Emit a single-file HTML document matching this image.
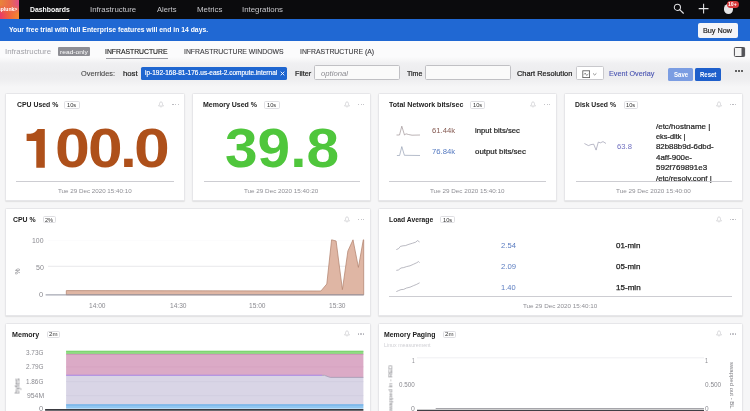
<!DOCTYPE html>
<html>
<head>
<meta charset="utf-8">
<style>
*{box-sizing:border-box;margin:0;padding:0}
html,body{width:750px;height:411px;overflow:hidden;background:#f6f6f7;font-family:"Liberation Sans",sans-serif;color:#222}
#w{position:absolute;left:0;top:0;width:750px;height:411px;overflow:hidden;will-change:transform}
.a{position:absolute}
.t{position:absolute;white-space:nowrap;transform-origin:0 50%}
.card{position:absolute;background:#fff;border:1px solid #e6e6e9;border-radius:1.5px;box-shadow:0 1px 1.2px rgba(0,0,0,0.09)}
svg{position:absolute;overflow:visible}
</style>
</head>
<body>
<div class="a" style="left:0px;top:0px;width:750.00px;height:19.00px;background:#0b0b0d;"></div>
<div class="a" style="left:0;top:0;width:19.2px;height:19.2px;background:linear-gradient(90deg,#ea3a68 0%,#f0603f 45%,#f28a30 100%)"></div>
<div class="a" style="left:0;top:0;width:19.2px;height:19.2px;background:linear-gradient(90deg,#e9843a 0%,#ea6a4a 50%,#de4f88 100%);-webkit-mask-image:linear-gradient(180deg,#000 0%,#000 25%,transparent 75%);mask-image:linear-gradient(180deg,#000 0%,#000 25%,transparent 75%)"></div>
<div class="t" style="left:-1.68px;top:5.82px;font-size:5.2px;line-height:6.76px;color:#fff;font-weight:bold;transform:scaleX(0.9791);">splunk&gt;</div>
<div class="t" style="left:29.55px;top:4.62px;font-size:7.5px;line-height:9.75px;color:#fff;font-weight:bold;transform:scaleX(0.9166);">Dashboards</div>
<div class="t" style="left:89.68px;top:4.50px;font-size:7.7px;line-height:10.01px;color:#c8c8cc;transform:scaleX(1.0200);">Infrastructure</div>
<div class="t" style="left:156.78px;top:4.50px;font-size:7.7px;line-height:10.01px;color:#c8c8cc;transform:scaleX(0.9903);">Alerts</div>
<div class="t" style="left:196.75px;top:4.50px;font-size:7.7px;line-height:10.01px;color:#c8c8cc;transform:scaleX(1.0293);">Metrics</div>
<div class="t" style="left:242.28px;top:4.50px;font-size:7.7px;line-height:10.01px;color:#c8c8cc;transform:scaleX(1.0190);">Integrations</div>
<svg style="left:670px;top:0" width="20" height="19" viewBox="0 0 20 19"><circle cx="7.4" cy="7.3" r="3.1" fill="none" stroke="#e2e2e4" stroke-width="1.05"/><path d="M9.7 9.6 L13.4 13.2" stroke="#e2e2e4" stroke-width="1.2" stroke-linecap="round"/></svg>
<svg style="left:695px;top:0" width="18" height="19" viewBox="0 0 18 19"><path d="M8.6 3.7V13.5M3.7 8.6H13.5" stroke="#e6e6e8" stroke-width="1.05"/></svg>
<div class="a" style="left:723.6px;top:4.2px;width:9.6px;height:9.6px;border-radius:5px;background:#e4e4e6"></div>
<div class="a" style="left:726.8px;top:0.8px;width:12.4px;height:6.8px;border-radius:3.4px;background:#d63a3c"></div>
<div class="t" style="left:728.48px;top:1.22px;font-size:5.2px;line-height:6.76px;color:#fff;font-weight:bold;transform:scaleX(0.9893);">10+</div>
<div class="a" style="left:0px;top:18.9px;width:750.00px;height:21.70px;background:#2068d3;"></div>
<div class="a" style="left:30px;top:18.6px;width:39.00px;height:1.40px;background:#fff;"></div>
<div class="t" style="left:8.88px;top:24.95px;font-size:7.3px;line-height:9.49px;color:#fff;font-weight:bold;transform:scaleX(0.9341);">Your free trial with full Enterprise features will end in 14 days.</div>
<div class="a" style="left:697.6px;top:23px;width:40.6px;height:15px;border-radius:2px;background:#f4f5f8"></div>
<div class="t" style="left:703.01px;top:25.53px;font-size:7.8px;line-height:10.14px;color:#222;-webkit-text-stroke:0.2px #222;transform:scaleX(0.9284);">Buy Now</div>
<div class="a" style="left:0px;top:40.6px;width:750.00px;height:19.40px;background:#fbfbfc;"></div>
<div class="a" style="left:0;top:57px;width:750px;height:30px;background:linear-gradient(180deg,#fbfbfc 0%,#f0f0f2 22%,#ececee 55%,#eeeef0 75%,#f6f6f7 100%)"></div>
<div class="t" style="left:4.68px;top:47.06px;font-size:7.6px;line-height:9.88px;color:#a2a2a8;transform:scaleX(1.0289);">Infrastructure</div>
<div class="a" style="left:58px;top:47.4px;width:31.6px;height:9px;border-radius:1px;background:#8e8e94"></div>
<div class="t" style="left:59.76px;top:47.97px;font-size:6.2px;line-height:8.06px;color:#fff;transform:scaleX(1.0776);">read-only</div>
<div class="t" style="left:105.37px;top:47.45px;font-size:7px;line-height:9.1px;color:#222;-webkit-text-stroke:0.15px #222;transform:scaleX(0.9742);">INFRASTRUCTURE</div>
<div class="a" style="left:106px;top:58px;width:61.60px;height:0.80px;background:#9a9aa0;"></div>
<div class="t" style="left:184.37px;top:47.45px;font-size:7px;line-height:9.1px;color:#3c3c40;-webkit-text-stroke:0.12px #3c3c40;transform:scaleX(0.9808);">INFRASTRUCTURE WINDOWS</div>
<div class="t" style="left:300.37px;top:47.45px;font-size:7px;line-height:9.1px;color:#3c3c40;-webkit-text-stroke:0.12px #3c3c40;transform:scaleX(0.9817);">INFRASTRUCTURE (A)</div>
<svg style="left:733px;top:46px" width="13" height="12" viewBox="0 0 13 12"><rect x="1.4" y="1.5" width="10.2" height="9" rx="1" fill="#f4f4f4" stroke="#4c4c50" stroke-width="1"/><rect x="8.5" y="1.5" width="3.1" height="9" fill="#55555a"/></svg>
<div class="t" style="left:80.65px;top:68.79px;font-size:7.4px;line-height:9.62px;color:#484848;-webkit-text-stroke:0.1px #484848;transform:scaleX(0.9965);">Overrides:</div>
<div class="t" style="left:123.47px;top:68.72px;font-size:7.5px;line-height:9.75px;color:#222;-webkit-text-stroke:0.2px #222;transform:scaleX(1.0290);">host</div>
<div class="a" style="left:141px;top:66.8px;width:146.1px;height:12.8px;border-radius:1.6px;background:#1f66d0"></div>
<div class="t" style="left:145.17px;top:68.78px;font-size:6.8px;line-height:8.84px;color:#fff;-webkit-text-stroke:0.18px #fff;transform:scaleX(0.9560);">ip-192-168-81-176.us-east-2.compute.internal</div>
<svg style="left:279.6px;top:70.6px" width="5" height="5" viewBox="0 0 5 5"><path d="M0.7 0.7L4.3 4.3M4.3 0.7L0.7 4.3" stroke="#fff" stroke-width="0.9"/></svg>
<div class="t" style="left:294.70px;top:68.66px;font-size:7.6px;line-height:9.88px;color:#222;-webkit-text-stroke:0.22px #222;transform:scaleX(0.9602);">Filter</div>
<div class="a" style="left:314.4px;top:65.4px;width:85.2px;height:15px;border:1px solid #c0c0c4;border-radius:1.6px;background:#fafafa"></div>
<div class="t" style="left:320.75px;top:70.38px;font-size:6.8px;line-height:8.84px;color:#8c8c92;font-style:italic;transform:scaleX(1.1364);">optional</div>
<div class="t" style="left:406.75px;top:68.66px;font-size:7.6px;line-height:9.88px;color:#222;-webkit-text-stroke:0.22px #222;transform:scaleX(0.9252);">Time</div>
<div class="a" style="left:425px;top:65.4px;width:86.4px;height:15px;border:1px solid #c0c0c4;border-radius:1.6px;background:#fafafa"></div>
<div class="t" style="left:516.93px;top:68.66px;font-size:7.6px;line-height:9.88px;color:#222;-webkit-text-stroke:0.22px #222;transform:scaleX(0.9778);">Chart Resolution</div>
<div class="a" style="left:576px;top:66px;width:27.6px;height:14px;border:1px solid #c8c8cc;border-radius:1.6px;background:#fff"></div>
<svg style="left:582px;top:69.6px" width="16" height="9" viewBox="0 0 16 9"><rect x="0.8" y="0.8" width="6.8" height="6.8" fill="none" stroke="#555" stroke-width="0.8"/><path d="M2 4.6 L3.2 3 L4.6 5.4 L6.4 4" fill="none" stroke="#555" stroke-width="0.6"/><path d="M11 3.4 L12.7 5 L14.4 3.4" fill="none" stroke="#666" stroke-width="0.7"/></svg>
<div class="t" style="left:608.71px;top:69.19px;font-size:7.4px;line-height:9.62px;color:#4a55b2;-webkit-text-stroke:0.12px #4a55b2;transform:scaleX(0.9749);">Event Overlay</div>
<div class="a" style="left:668.4px;top:67.8px;width:24.6px;height:12.8px;border-radius:1.6px;background:#7b9de2"></div>
<div class="t" style="left:673.63px;top:70.05px;font-size:7px;line-height:9.1px;color:#fff;font-weight:bold;transform:scaleX(0.8673);">Save</div>
<div class="a" style="left:695px;top:67.8px;width:26px;height:12.8px;border-radius:1.6px;background:#1e5fcb"></div>
<div class="t" style="left:699.60px;top:70.05px;font-size:7px;line-height:9.1px;color:#fff;font-weight:bold;transform:scaleX(0.8584);">Reset</div>
<div class="a" style="left:735.00px;top:70.2px;width:1.9px;height:1.9px;border-radius:1px;background:#333"></div>
<div class="a" style="left:738.10px;top:70.2px;width:1.9px;height:1.9px;border-radius:1px;background:#333"></div>
<div class="a" style="left:741.20px;top:70.2px;width:1.9px;height:1.9px;border-radius:1px;background:#333"></div>
<div class="card" style="left:5.30px;top:92.70px;width:179.40px;height:108.50px"></div>
<div class="t" style="left:16.62px;top:100.03px;font-size:7.8px;line-height:10.14px;color:#222;font-weight:bold;transform:scaleX(0.8815);">CPU Used %</div>
<div class="a" style="left:64.3px;top:100.6px;width:15.70px;height:8.00px;border:0.7px solid #dedee2;border-radius:1.6px;background:#fff"></div>
<div class="t" style="left:67.36px;top:101.62px;font-size:5.2px;line-height:6.76px;color:#333;transform:scaleX(1.1026);">10s</div>
<svg style="left:158px;top:100.9px" width="6" height="7" viewBox="0 0 6 7"><path d="M0.5 5 L1.4 3.8 L1.6 2.4 Q1.8 0.8 3 0.8 Q4.2 0.8 4.4 2.4 L4.6 3.8 L5.5 5 Z" fill="none" stroke="#c2c2c8" stroke-width="0.6"/><path d="M2.3 5.9 H3.7" stroke="#c2c2c8" stroke-width="0.6"/></svg>
<div class="a" style="left:172.40px;top:103.9px;width:1.3px;height:1.3px;border-radius:1px;background:#b2b2b8"></div>
<div class="a" style="left:174.95px;top:103.9px;width:1.3px;height:1.3px;border-radius:1px;background:#b2b2b8"></div>
<div class="a" style="left:177.50px;top:103.9px;width:1.3px;height:1.3px;border-radius:1px;background:#b2b2b8"></div>
<svg style="left:0;top:0" width="200" height="200" viewBox="0 0 200 200"><path d="M26.6 133.7 H30.2 Q35.6 133.2 37.6 129 H44.8 V167.7 H36.3 V140.9 H26.6 Z" fill="#ae501a"/></svg>
<div class="t" style="left:54.56px;top:112.29px;font-size:55.4px;line-height:72.02px;color:#ae501a;font-weight:bold;transform:scaleX(1.1315);">0</div>
<div class="t" style="left:88.27px;top:112.29px;font-size:55.4px;line-height:72.02px;color:#ae501a;font-weight:bold;transform:scaleX(1.1239);">0</div>
<div class="t" style="left:120.24px;top:112.29px;font-size:55.4px;line-height:72.02px;color:#ae501a;font-weight:bold;transform:scaleX(1.0932);">.</div>
<div class="t" style="left:134.39px;top:112.29px;font-size:55.4px;line-height:72.02px;color:#ae501a;font-weight:bold;transform:scaleX(1.1617);">0</div>
<div class="a" style="left:15.7px;top:181.2px;width:158.60px;height:1.00px;background:#cdcdd2;"></div>
<div class="t" style="left:58.16px;top:188.06px;font-size:5.9px;line-height:7.67px;color:#8e8e94;transform:scaleX(1.0592);">Tue 29 Dec 2020 15:40:10</div>
<div class="card" style="left:191.80px;top:92.70px;width:178.90px;height:108.50px"></div>
<div class="t" style="left:202.54px;top:100.03px;font-size:7.8px;line-height:10.14px;color:#222;font-weight:bold;transform:scaleX(0.8970);">Memory Used %</div>
<div class="a" style="left:264.4px;top:100.6px;width:15.20px;height:8.00px;border:0.7px solid #dedee2;border-radius:1.6px;background:#fff"></div>
<div class="t" style="left:267.16px;top:101.62px;font-size:5.2px;line-height:6.76px;color:#333;transform:scaleX(1.1026);">10s</div>
<svg style="left:344.2px;top:100.9px" width="6" height="7" viewBox="0 0 6 7"><path d="M0.5 5 L1.4 3.8 L1.6 2.4 Q1.8 0.8 3 0.8 Q4.2 0.8 4.4 2.4 L4.6 3.8 L5.5 5 Z" fill="none" stroke="#c2c2c8" stroke-width="0.6"/><path d="M2.3 5.9 H3.7" stroke="#c2c2c8" stroke-width="0.6"/></svg>
<div class="a" style="left:358.00px;top:103.9px;width:1.3px;height:1.3px;border-radius:1px;background:#b2b2b8"></div>
<div class="a" style="left:360.55px;top:103.9px;width:1.3px;height:1.3px;border-radius:1px;background:#b2b2b8"></div>
<div class="a" style="left:363.10px;top:103.9px;width:1.3px;height:1.3px;border-radius:1px;background:#b2b2b8"></div>
<div class="t" style="left:224.51px;top:112.29px;font-size:55.4px;line-height:72.02px;color:#4fc63c;font-weight:bold;transform:scaleX(1.0579);">39.8</div>
<div class="a" style="left:203.7px;top:181.2px;width:156.60px;height:1.00px;background:#cdcdd2;"></div>
<div class="t" style="left:244.16px;top:188.06px;font-size:5.9px;line-height:7.67px;color:#8e8e94;transform:scaleX(1.0679);">Tue 29 Dec 2020 15:40:20</div>
<div class="card" style="left:377.80px;top:92.70px;width:178.90px;height:108.50px"></div>
<div class="t" style="left:389.12px;top:100.03px;font-size:7.8px;line-height:10.14px;color:#222;font-weight:bold;transform:scaleX(0.9048);">Total Network bits/sec</div>
<div class="a" style="left:470.2px;top:100.6px;width:15.20px;height:8.00px;border:0.7px solid #dedee2;border-radius:1.6px;background:#fff"></div>
<div class="t" style="left:472.96px;top:101.62px;font-size:5.2px;line-height:6.76px;color:#333;transform:scaleX(1.1026);">10s</div>
<svg style="left:530.2px;top:100.9px" width="6" height="7" viewBox="0 0 6 7"><path d="M0.5 5 L1.4 3.8 L1.6 2.4 Q1.8 0.8 3 0.8 Q4.2 0.8 4.4 2.4 L4.6 3.8 L5.5 5 Z" fill="none" stroke="#c2c2c8" stroke-width="0.6"/><path d="M2.3 5.9 H3.7" stroke="#c2c2c8" stroke-width="0.6"/></svg>
<div class="a" style="left:544.00px;top:103.9px;width:1.3px;height:1.3px;border-radius:1px;background:#b2b2b8"></div>
<div class="a" style="left:546.55px;top:103.9px;width:1.3px;height:1.3px;border-radius:1px;background:#b2b2b8"></div>
<div class="a" style="left:549.10px;top:103.9px;width:1.3px;height:1.3px;border-radius:1px;background:#b2b2b8"></div>
<svg style="left:396px;top:123.7px" width="26" height="13" viewBox="0 0 26 13"><path d="M0.5 11 H3.5 L5.8 2.2 L8.5 11 L10 9.8 L12.5 10.5 L16 11.2 L24 11" fill="none" stroke="#8e8284" stroke-width="0.6"/></svg>
<div class="t" style="left:432.41px;top:127.32px;font-size:6.9px;line-height:8.97px;color:#855a52;transform:scaleX(1.1186);">61.44k</div>
<div class="t" style="left:475.09px;top:126.45px;font-size:7.3px;line-height:9.49px;color:#222;-webkit-text-stroke:0.2px #222;transform:scaleX(1.0541);">input bits/sec</div>
<svg style="left:396px;top:145.2px" width="26" height="13" viewBox="0 0 26 13"><path d="M0.9 10.5 H3.6 L5.8 1.6 L8.4 10.3 L24 10.5" fill="none" stroke="#8590a8" stroke-width="0.6"/></svg>
<div class="t" style="left:432.41px;top:147.61px;font-size:6.9px;line-height:8.97px;color:#5479c0;transform:scaleX(1.1190);">76.84k</div>
<div class="t" style="left:474.57px;top:147.35px;font-size:7.3px;line-height:9.49px;color:#222;-webkit-text-stroke:0.2px #222;transform:scaleX(1.0800);">output bits/sec</div>
<div class="a" style="left:389.3px;top:181.2px;width:156.60px;height:1.00px;background:#cdcdd2;"></div>
<div class="t" style="left:430.16px;top:188.06px;font-size:5.9px;line-height:7.67px;color:#8e8e94;transform:scaleX(1.0708);">Tue 29 Dec 2020 15:40:10</div>
<div class="card" style="left:563.80px;top:92.70px;width:178.90px;height:108.50px"></div>
<div class="t" style="left:574.75px;top:100.03px;font-size:7.8px;line-height:10.14px;color:#222;font-weight:bold;transform:scaleX(0.8764);">Disk Used %</div>
<div class="a" style="left:623.6px;top:100.6px;width:14.40px;height:8.00px;border:0.7px solid #dedee2;border-radius:1.6px;background:#fff"></div>
<div class="t" style="left:626.16px;top:101.62px;font-size:5.2px;line-height:6.76px;color:#333;transform:scaleX(1.1026);">10s</div>
<svg style="left:716px;top:100.9px" width="6" height="7" viewBox="0 0 6 7"><path d="M0.5 5 L1.4 3.8 L1.6 2.4 Q1.8 0.8 3 0.8 Q4.2 0.8 4.4 2.4 L4.6 3.8 L5.5 5 Z" fill="none" stroke="#c2c2c8" stroke-width="0.6"/><path d="M2.3 5.9 H3.7" stroke="#c2c2c8" stroke-width="0.6"/></svg>
<div class="a" style="left:729.70px;top:103.9px;width:1.3px;height:1.3px;border-radius:1px;background:#b2b2b8"></div>
<div class="a" style="left:732.25px;top:103.9px;width:1.3px;height:1.3px;border-radius:1px;background:#b2b2b8"></div>
<div class="a" style="left:734.80px;top:103.9px;width:1.3px;height:1.3px;border-radius:1px;background:#b2b2b8"></div>
<svg style="left:0;top:0" width="750" height="200" viewBox="0 0 750 200"><path d="M584.4 143.5 L588.4 145.6 L591 144.6 L593.7 144.2 L596.1 150.1 L598.3 142.1 L600.5 142.8 L603 141.6 L606 143.5" fill="none" stroke="#8c8ca2" stroke-width="0.6"/></svg>
<div class="t" style="left:616.52px;top:142.81px;font-size:6.9px;line-height:8.97px;color:#7070c0;transform:scaleX(1.1106);">63.8</div>
<div class="t" style="left:656.00px;top:121.55px;font-size:7.3px;line-height:9.49px;color:#222;-webkit-text-stroke:0.2px #222;transform:scaleX(1.0910);">/etc/hostname |</div>
<div class="t" style="left:655.69px;top:132.01px;font-size:7.3px;line-height:9.49px;color:#222;-webkit-text-stroke:0.2px #222;transform:scaleX(1.0135);">eks-dltk |</div>
<div class="t" style="left:655.66px;top:142.47px;font-size:7.3px;line-height:9.49px;color:#222;-webkit-text-stroke:0.2px #222;transform:scaleX(1.0766);">82b88b9d-6dbd-</div>
<div class="t" style="left:655.83px;top:152.94px;font-size:7.3px;line-height:9.49px;color:#222;-webkit-text-stroke:0.2px #222;transform:scaleX(1.0867);">4aff-900e-</div>
<div class="t" style="left:655.68px;top:163.39px;font-size:7.3px;line-height:9.49px;color:#222;-webkit-text-stroke:0.2px #222;transform:scaleX(1.0960);">592f769891e3</div>
<div class="t" style="left:656.00px;top:173.85px;font-size:7.3px;line-height:9.49px;color:#222;-webkit-text-stroke:0.2px #222;transform:scaleX(1.0612);">/etc/resolv.conf |</div>
<div class="a" style="left:575.8px;top:181.2px;width:156.00px;height:1.00px;background:#cdcdd2;"></div>
<div class="t" style="left:616.06px;top:188.06px;font-size:5.9px;line-height:7.67px;color:#8e8e94;transform:scaleX(1.0751);">Tue 29 Dec 2020 15:40:00</div>
<div class="card" style="left:5.30px;top:208.10px;width:365.40px;height:107.50px"></div>
<div class="t" style="left:12.52px;top:214.93px;font-size:7.8px;line-height:10.14px;color:#222;font-weight:bold;transform:scaleX(0.8864);">CPU %</div>
<div class="a" style="left:42.6px;top:215.8px;width:13.00px;height:7.40px;border:0.7px solid #dedee2;border-radius:1.6px;background:#fff"></div>
<div class="t" style="left:44.92px;top:216.52px;font-size:5.2px;line-height:6.76px;color:#333;transform:scaleX(1.0747);">2%</div>
<svg style="left:344px;top:215.6px" width="6" height="7" viewBox="0 0 6 7"><path d="M0.5 5 L1.4 3.8 L1.6 2.4 Q1.8 0.8 3 0.8 Q4.2 0.8 4.4 2.4 L4.6 3.8 L5.5 5 Z" fill="none" stroke="#c2c2c8" stroke-width="0.6"/><path d="M2.3 5.9 H3.7" stroke="#c2c2c8" stroke-width="0.6"/></svg>
<div class="a" style="left:358.00px;top:218.6px;width:1.3px;height:1.3px;border-radius:1px;background:#b2b2b8"></div>
<div class="a" style="left:360.55px;top:218.6px;width:1.3px;height:1.3px;border-radius:1px;background:#b2b2b8"></div>
<div class="a" style="left:363.10px;top:218.6px;width:1.3px;height:1.3px;border-radius:1px;background:#b2b2b8"></div>
<div class="t" style="left:31.98px;top:237.00px;font-size:6.3px;line-height:8.19px;color:#8a8a90;transform:scaleX(1.0929);">100</div>
<div class="t" style="left:35.62px;top:263.80px;font-size:6.3px;line-height:8.19px;color:#8a8a90;transform:scaleX(1.1206);">50</div>
<div class="t" style="left:39.31px;top:290.50px;font-size:6.3px;line-height:8.19px;color:#8a8a90;transform:scaleX(1.1930);">0</div>
<div class="a" style="left:13px;top:266.6px;width:9px;height:9px;font-size:6.8px;line-height:9px;text-align:center;color:#77777d;transform:rotate(-90deg);will-change:transform">%</div>
<svg style="left:0;top:0" width="750" height="411" viewBox="0 0 750 411"><path d="M48 266.3 H363.5" stroke="#e2e2e6" stroke-width="0.8"/><path d="M48 240.3 H363.5" stroke="#f8f8fa" stroke-width="0.6"/><path d="M66.3 294.8 V290.6 L320.9 291 L326.8 284 L331.6 239.8 L336.1 241 L342.4 289.6 L347.9 251 L353 239.8 L358.4 267.4 L363.3 239.8 L363.7 239.8 V294.8 Z" fill="#dfb6a4" stroke="#b38470" stroke-width="0.75" stroke-linejoin="round"/><path d="M45.6 294.9 H363.7" stroke="#8f93a0" stroke-width="1"/></svg>
<div class="t" style="left:89.30px;top:302.30px;font-size:6.3px;line-height:8.19px;color:#8a8a90;transform:scaleX(1.0502);">14:00</div>
<div class="t" style="left:169.70px;top:302.30px;font-size:6.3px;line-height:8.19px;color:#8a8a90;transform:scaleX(1.0502);">14:30</div>
<div class="t" style="left:249.30px;top:302.30px;font-size:6.3px;line-height:8.19px;color:#8a8a90;transform:scaleX(1.0502);">15:00</div>
<div class="t" style="left:328.60px;top:302.30px;font-size:6.3px;line-height:8.19px;color:#8a8a90;transform:scaleX(1.0502);">15:30</div>
<div class="card" style="left:377.80px;top:208.10px;width:364.90px;height:107.50px"></div>
<div class="t" style="left:388.75px;top:214.93px;font-size:7.8px;line-height:10.14px;color:#222;font-weight:bold;transform:scaleX(0.8681);">Load Average</div>
<div class="a" style="left:440.4px;top:215.8px;width:14.80px;height:7.40px;border:0.7px solid #dedee2;border-radius:1.6px;background:#fff"></div>
<div class="t" style="left:442.96px;top:216.52px;font-size:5.2px;line-height:6.76px;color:#333;transform:scaleX(1.1026);">10s</div>
<svg style="left:716px;top:215.6px" width="6" height="7" viewBox="0 0 6 7"><path d="M0.5 5 L1.4 3.8 L1.6 2.4 Q1.8 0.8 3 0.8 Q4.2 0.8 4.4 2.4 L4.6 3.8 L5.5 5 Z" fill="none" stroke="#c2c2c8" stroke-width="0.6"/><path d="M2.3 5.9 H3.7" stroke="#c2c2c8" stroke-width="0.6"/></svg>
<div class="a" style="left:729.70px;top:218.6px;width:1.3px;height:1.3px;border-radius:1px;background:#b2b2b8"></div>
<div class="a" style="left:732.25px;top:218.6px;width:1.3px;height:1.3px;border-radius:1px;background:#b2b2b8"></div>
<div class="a" style="left:734.80px;top:218.6px;width:1.3px;height:1.3px;border-radius:1px;background:#b2b2b8"></div>
<svg style="left:396.3px;top:239.9px" width="25" height="11" viewBox="0 0 25 11"><path d="M0.3 9.6 L2.6 8.6 L4.4 6.4 L7 5.8 L9.5 5.6 L12 4.6 L16.6 3.2 L19.6 2.2 L21.6 0.6 L23.6 2" fill="none" stroke="#8c8c98" stroke-width="0.6"/></svg>
<div class="t" style="left:500.82px;top:242.11px;font-size:6.9px;line-height:8.97px;color:#5a7cc0;transform:scaleX(1.1101);">2.54</div>
<div class="t" style="left:615.89px;top:240.75px;font-size:7.3px;line-height:9.49px;color:#222;-webkit-text-stroke:0.25px #222;transform:scaleX(1.0898);">01-min</div>
<svg style="left:396.3px;top:260.8px" width="25" height="11" viewBox="0 0 25 11"><path d="M0.3 9.4 L2.4 9 L5 7 L7.6 6.6 L10.6 5.6 L14 4.8 L17.6 3.2 L20.6 1.8 L22.6 0.6 L23.6 1.6" fill="none" stroke="#8c8c98" stroke-width="0.6"/></svg>
<div class="t" style="left:500.81px;top:263.01px;font-size:6.9px;line-height:8.97px;color:#5a7cc0;transform:scaleX(1.1209);">2.09</div>
<div class="t" style="left:615.89px;top:261.65px;font-size:7.3px;line-height:9.49px;color:#222;-webkit-text-stroke:0.25px #222;transform:scaleX(1.0898);">05-min</div>
<svg style="left:396.3px;top:281.7px" width="25" height="11" viewBox="0 0 25 11"><path d="M0.3 9.6 L2.6 8.6 L5 7.6 L7.6 7.4 L10.6 6 L14 5.2 L17.6 3.6 L20.6 2.4 L23.6 0.8" fill="none" stroke="#8c8c98" stroke-width="0.6"/></svg>
<div class="t" style="left:501.23px;top:283.91px;font-size:6.9px;line-height:8.97px;color:#5a7cc0;transform:scaleX(1.0838);">1.40</div>
<div class="t" style="left:615.59px;top:282.55px;font-size:7.3px;line-height:9.49px;color:#222;-webkit-text-stroke:0.25px #222;transform:scaleX(1.1036);">15-min</div>
<div class="a" style="left:389.3px;top:296.2px;width:342.50px;height:1.00px;background:#cdcdd2;"></div>
<div class="t" style="left:522.86px;top:302.97px;font-size:5.9px;line-height:7.67px;color:#8e8e94;transform:scaleX(1.0693);">Tue 29 Dec 2020 15:40:10</div>
<div class="card" style="left:5.30px;top:322.90px;width:365.40px;height:107.30px"></div>
<div class="t" style="left:12.43px;top:329.73px;font-size:7.8px;line-height:10.14px;color:#222;font-weight:bold;transform:scaleX(0.9131);">Memory</div>
<div class="a" style="left:47.4px;top:330.8px;width:12.90px;height:7.20px;border:0.7px solid #dedee2;border-radius:1.6px;background:#fff"></div>
<div class="t" style="left:49.49px;top:331.42px;font-size:5.2px;line-height:6.76px;color:#333;transform:scaleX(1.1774);">2m</div>
<svg style="left:343.8px;top:330.4px" width="6" height="7" viewBox="0 0 6 7"><path d="M0.5 5 L1.4 3.8 L1.6 2.4 Q1.8 0.8 3 0.8 Q4.2 0.8 4.4 2.4 L4.6 3.8 L5.5 5 Z" fill="none" stroke="#c2c2c8" stroke-width="0.6"/><path d="M2.3 5.9 H3.7" stroke="#c2c2c8" stroke-width="0.6"/></svg>
<div class="a" style="left:357.80px;top:333.4px;width:1.3px;height:1.3px;border-radius:1px;background:#b2b2b8"></div>
<div class="a" style="left:360.35px;top:333.4px;width:1.3px;height:1.3px;border-radius:1px;background:#b2b2b8"></div>
<div class="a" style="left:362.90px;top:333.4px;width:1.3px;height:1.3px;border-radius:1px;background:#b2b2b8"></div>
<div class="t" style="left:26.16px;top:349.00px;font-size:6.3px;line-height:8.19px;color:#8a8a90;transform:scaleX(1.0209);">3.73G</div>
<div class="t" style="left:26.08px;top:362.80px;font-size:6.3px;line-height:8.19px;color:#8a8a90;transform:scaleX(1.0256);">2.79G</div>
<div class="t" style="left:26.32px;top:377.50px;font-size:6.3px;line-height:8.19px;color:#8a8a90;transform:scaleX(1.0113);">1.86G</div>
<div class="t" style="left:26.69px;top:391.50px;font-size:6.3px;line-height:8.19px;color:#8a8a90;transform:scaleX(1.0836);">954M</div>
<div class="t" style="left:39.31px;top:404.80px;font-size:6.3px;line-height:8.19px;color:#8a8a90;transform:scaleX(1.1930);">0</div>
<div class="a" style="left:5.4px;top:380.6px;width:25px;height:10px;font-size:6.4px;line-height:10px;text-align:center;color:#77777d;transform:rotate(-90deg);will-change:transform">bytes</div>
<svg style="left:0;top:0" width="750" height="411" viewBox="0 0 750 411"><rect x="66.1" y="350.9" width="297.3" height="3.1" fill="#8fdc82"/><path d="M66.1 351.2 H363.4" stroke="#6fcc62" stroke-width="0.7"/><path d="M66.1 354 H363.4 V377.4 H330.2 L324.4 375.3 H66.1 Z" fill="#dbaac6"/><path d="M66.1 354.3 H363.4" stroke="#c48aae" stroke-width="0.7"/><path d="M66.1 366.9 H363.4" stroke="#d19fbd" stroke-width="0.5"/><path d="M66.1 375.3 H324.4 L330.2 377.4 H363.4 V404.4 H66.1 Z" fill="#d9d5e6"/><path d="M66.1 375.3 H322" fill="none" stroke="#a680e2" stroke-width="1.1"/><path d="M322 375.3 H324.4 L330.2 377.4 H363.4" fill="none" stroke="#a79bb6" stroke-width="0.9"/><path d="M66.1 381.6 H363.4 M66.1 395.6 H363.4" stroke="#cdc8dc" stroke-width="0.5"/><rect x="66.1" y="404.4" width="297.3" height="4.2" fill="#90c6f0"/><path d="M66.1 404.9 H363.4" stroke="#5aa2e2" stroke-width="0.8"/><path d="M45.1 409.8 H363.4" stroke="#3a3a40" stroke-width="1.8"/></svg>
<div class="card" style="left:377.80px;top:322.90px;width:364.90px;height:107.30px"></div>
<div class="t" style="left:384.34px;top:329.73px;font-size:7.8px;line-height:10.14px;color:#222;font-weight:bold;transform:scaleX(0.8853);">Memory Paging</div>
<div class="a" style="left:442.8px;top:330.8px;width:12.90px;height:7.20px;border:0.7px solid #dedee2;border-radius:1.6px;background:#fff"></div>
<div class="t" style="left:444.89px;top:331.42px;font-size:5.2px;line-height:6.76px;color:#333;transform:scaleX(1.1774);">2m</div>
<svg style="left:716.4px;top:330.4px" width="6" height="7" viewBox="0 0 6 7"><path d="M0.5 5 L1.4 3.8 L1.6 2.4 Q1.8 0.8 3 0.8 Q4.2 0.8 4.4 2.4 L4.6 3.8 L5.5 5 Z" fill="none" stroke="#c2c2c8" stroke-width="0.6"/><path d="M2.3 5.9 H3.7" stroke="#c2c2c8" stroke-width="0.6"/></svg>
<div class="a" style="left:729.70px;top:333.4px;width:1.3px;height:1.3px;border-radius:1px;background:#b2b2b8"></div>
<div class="a" style="left:732.25px;top:333.4px;width:1.3px;height:1.3px;border-radius:1px;background:#b2b2b8"></div>
<div class="a" style="left:734.80px;top:333.4px;width:1.3px;height:1.3px;border-radius:1px;background:#b2b2b8"></div>
<div class="t" style="left:384.36px;top:342.29px;font-size:5.4px;line-height:7.02px;color:#cfcfd4;transform:scaleX(0.9842);">Linux measurement</div>
<div class="t" style="left:412.23px;top:356.50px;font-size:6.3px;line-height:8.19px;color:#8a8a90;transform:scaleX(0.7716);">1</div>
<div class="t" style="left:399.26px;top:380.50px;font-size:6.3px;line-height:8.19px;color:#8a8a90;transform:scaleX(0.9949);">0.500</div>
<div class="t" style="left:411.13px;top:404.80px;font-size:6.3px;line-height:8.19px;color:#8a8a90;transform:scaleX(1.0935);">0</div>
<div class="t" style="left:704.90px;top:356.50px;font-size:6.3px;line-height:8.19px;color:#8a8a90;transform:scaleX(0.8451);">1</div>
<div class="t" style="left:705.05px;top:380.50px;font-size:6.3px;line-height:8.19px;color:#8a8a90;transform:scaleX(1.0277);">0.500</div>
<div class="t" style="left:705.05px;top:404.80px;font-size:6.3px;line-height:8.19px;color:#8a8a90;transform:scaleX(1.0273);">0</div>
<div class="a" style="left:390.2px;top:365.2px;width:0;height:0"><div style="position:absolute;right:0;top:-5px;white-space:nowrap;font-size:6px;line-height:10px;color:#808086;transform-origin:100% 50%;transform:rotate(-90deg);will-change:transform">swapped in - RED</div></div>
<div class="a" style="left:732.4px;top:361.7px;width:0;height:0"><div style="position:absolute;left:0;top:-5px;white-space:nowrap;font-size:6px;line-height:10px;color:#808086;transform-origin:0 50%;transform:rotate(90deg);will-change:transform">swapped out - BL</div></div>
<svg style="left:0;top:0" width="750" height="411" viewBox="0 0 750 411"><path d="M417 357.8 H704" stroke="#efeff2" stroke-width="1"/><path d="M435.7 408.5 H704" stroke="#8e8e94" stroke-width="0.8"/><path d="M417 410.3 H704" stroke="#404046" stroke-width="1.3"/></svg>
</body>
</html>
